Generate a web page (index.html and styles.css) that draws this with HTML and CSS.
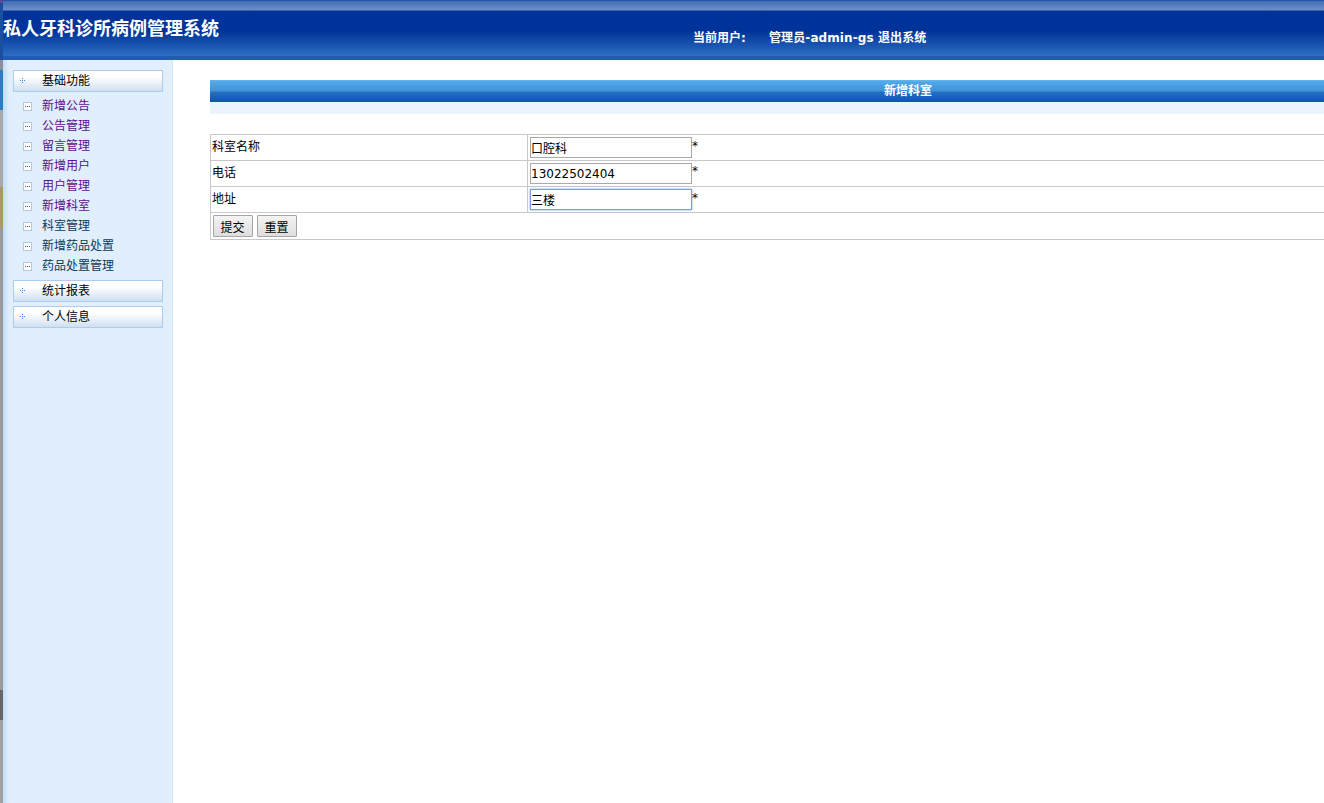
FILE: index.html
```html
<!DOCTYPE html>
<html lang="zh-CN">
<head>
<meta charset="utf-8">
<title>私人牙科诊所病例管理系统</title>
<link rel="stylesheet" href="styles.css">
</head>
<body>
<div class="edge"></div>
<div class="app">
  <header class="top">
    <h1 class="brand">私人牙科诊所病例管理系统</h1>
    <div class="user"><span class="user-label">当前用户:</span><span class="user-name">管理员-admin-gs 退出系统</span></div>
  </header>
  <div class="body-row">
    <aside class="side">
      <div class="menu-head"><svg class="dots" viewBox="0 0 5 5"><path d="M2 0h1v1H2zM0 2h1v1H0zM2 2h1v1H2zM4 2h1v1H4zM2 4h1v1H2z"/></svg>基础功能</div>
      <ul class="menu">
        <li class="visited"><i class="box"></i>新增公告</li>
        <li class="visited"><i class="box"></i>公告管理</li>
        <li class="visited"><i class="box"></i>留言管理</li>
        <li class="visited"><i class="box"></i>新增用户</li>
        <li class="visited"><i class="box"></i>用户管理</li>
        <li class="visited"><i class="box"></i>新增科室</li>
        <li><i class="box"></i>科室管理</li>
        <li><i class="box"></i>新增药品处置</li>
        <li><i class="box"></i>药品处置管理</li>
      </ul>
      <div class="menu-head"><svg class="dots" viewBox="0 0 5 5"><path d="M2 0h1v1H2zM0 2h1v1H0zM2 2h1v1H2zM4 2h1v1H4zM2 4h1v1H2z"/></svg>统计报表</div>
      <div class="menu-head"><svg class="dots" viewBox="0 0 5 5"><path d="M2 0h1v1H2zM0 2h1v1H0zM2 2h1v1H2zM4 2h1v1H4zM2 4h1v1H2z"/></svg>个人信息</div>
    </aside>
    <main class="main">
      <div class="panel">
        <div class="panel-title">新增科室</div>
        <div class="panel-sub"></div>
        <form>
          <table class="form-table">
            <tr><td class="label">科室名称</td><td class="field"><input class="text" value="口腔科"><span class="req">*</span></td></tr>
            <tr><td class="label">电话</td><td class="field"><input class="text" value="13022502404"><span class="req">*</span></td></tr>
            <tr><td class="label">地址</td><td class="field"><input class="text focus" value="三楼"><span class="req">*</span></td></tr>
            <tr><td class="actions" colspan="2"><button type="button" class="btn">提交</button><button type="button" class="btn">重置</button></td></tr>
          </table>
        </form>
      </div>
    </main>
  </div>
</div>
</body>
</html>
```
FILE: styles.css
```css
* { box-sizing: border-box; }
html, body { height: 100%; }
body {
  margin: 0;
  display: flex;
  height: 803px;
  overflow: hidden;
  background: #fff;
  color: #000;
  font: 12px "DejaVu Sans", "Noto Sans CJK SC", sans-serif;
}
.edge {
  width: 3px;
  flex: none;
  background: linear-gradient(#5a4a96 0 3px, #1a4fa0 3px 60px, #8a8f96 60px 70px, #2a7fc0 70px 110px, #a8a8a8 110px 187px, #a89a60 187px 228px, #9a9a9a 228px 690px, #666 690px 720px, #a0a0a0 720px);
}
.app { flex: 1; min-width: 0; display: flex; flex-direction: column; }
.top {
  height: 60px;
  flex: none;
  display: flex;
  color: #fff;
  font-weight: bold;
  background: linear-gradient(#2157ab 0 1px, #3f6bb5 1px, #6e8fc9 10px, #003399 11px, #003399 31px, #2a6cc0 55px, #2f6fc2 56px, #1f5bb0 56px);
}
.brand {
  margin: 0;
  width: 690px;
  padding-top: 19px;
  font-size: 18px;
  line-height: 20px;
  font-weight: bold;
}
.user { padding-top: 31px; line-height: 15px; white-space: nowrap; }
.user-label { display: inline-block; width: 76px; }
.user-name { letter-spacing: .1px; }
.body-row { flex: 1; display: flex; min-height: 0; }
.side {
  width: 170px;
  flex: none;
  padding: 10px 9px 0 10px;
  border-right: 1px solid #d5e6f8;
  background: linear-gradient(90deg, #c0dbf7, #e1eefb 6px);
}
.menu-head {
  display: flex;
  align-items: center;
  height: 22px;
  margin-bottom: 4px;
  padding: 0 0 4px 6px;
  border: 1px solid #aecdee;
  background: linear-gradient(#fff 30%, #cfdff1);
}
.dots { width: 5px; height: 5px; margin: 3px 17px 0 0; fill: #2a8ae8; }
.menu { list-style: none; margin: 0 0 4px; padding: 0; }
.menu li {
  display: flex;
  align-items: center;
  height: 20px;
  padding: 0 0 4px 10px;
  color: #0a3c5c;
}
.menu li.visited { color: #5b0f8c; }
.box {
  width: 9px;
  height: 9px;
  margin: 5px 10px 0 0;
  border: 1px solid #b0c8e6;
  background: linear-gradient(90deg, #556 1px, transparent 1px) 1px 3px / 2px 1px repeat-x #fff;
}
.main { flex: 1; min-width: 0; overflow: hidden; padding: 20px 0 0 37px; }
.panel { width: 1396px; }
.panel-title {
  height: 22px;
  line-height: 22px;
  text-align: center;
  color: #fff;
  font-weight: bold;
  background: linear-gradient(#60b8f4 0, #50a8e8 2px, #3f92da 11px, #2470c4 12px, #1054ac 22px);
}
.panel-sub { height: 12px; margin-bottom: 20px; background: #ebf3fb; }
.form-table { width: 100%; border-collapse: collapse; table-layout: fixed; }
.form-table td { height: 26px; padding: 0 2px; border: 1px solid #c8c8c8; }
.form-table .label { width: 317px; padding: 0 0 4px 1px; }
.field { white-space: nowrap; }
.req { vertical-align: 3px; }
.text {
  width: 162px;
  height: 21px;
  padding: 0;
  border: 1px solid #a9a9a9;
  background: #fff;
  font: inherit;
  color: #000;
  outline: none;
}
.text.focus { border-color: #7a9fe0; box-shadow: 0 0 2px #7a9fe0; }
.form-table .actions { height: 27px; }
.btn {
  width: 40px;
  height: 22px;
  margin-right: 4px;
  padding: 0 1px 0 0;
  border: 1px solid #a6a6a6;
  border-radius: 1px;
  background: linear-gradient(#f4f4f4, #dedede);
  font: inherit;
  color: #000;
  vertical-align: middle;
}
```
